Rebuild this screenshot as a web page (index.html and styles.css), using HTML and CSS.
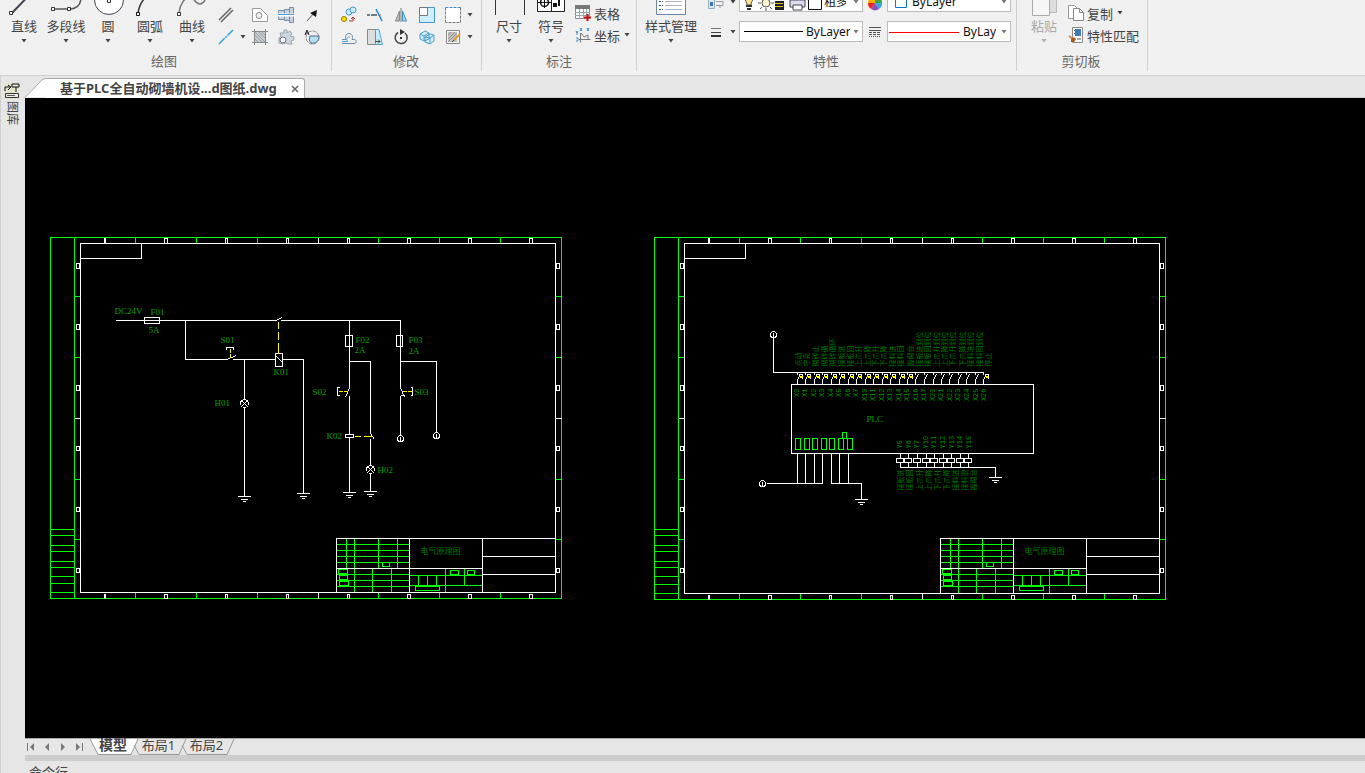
FILE: index.html
```
<!DOCTYPE html>
<html lang="zh-CN">
<head>
    <meta charset="utf-8">
    <meta name="viewport" content="width=device-width, initial-scale=1.0">
    <title>基于PLC全自动砌墙机设计图纸.dwg</title>
    <link rel="stylesheet" href="styles.css">
</head>
<body>
    <svg class="sprite" aria-hidden="true">
        <symbol id="caret" viewBox="0 0 6 4"><path d="M.500 0h5L3 3.500z" fill="currentColor"/></symbol>
    </svg>

    <div class="ribbon">
        <section class="panel panel-draw">
            <div class="tools">
                <button class="big-btn">
                    <svg class="big-icon" viewBox="0 0 32 32"><path d="M4 29 30 2" stroke="#445" stroke-width="2"/><path d="M1.500 27.500h3v3h-3z" fill="#fff" stroke="#333"/></svg>
                    <span>直线</span>
                    <svg class="caret"><use href="#caret"/></svg>
                </button>
                <button class="big-btn">
                    <svg class="big-icon" viewBox="0 0 32 32"><path d="M3 25h16c8 0 12-4 12-12" fill="none" stroke="#555" stroke-width="1.500"/><path d="M1.500 23.500h3v3h-3zM17.500 23.500h3v3h-3z" fill="#fff" stroke="#333"/></svg>
                    <span>多段线</span>
                    <svg class="caret"><use href="#caret"/></svg>
                </button>
                <button class="big-btn">
                    <svg class="big-icon" viewBox="0 0 32 32"><circle cx="17" cy="16" r="14.500" fill="#fff" stroke="#445"/><path d="M15.500 15.500h3v3h-3z" fill="#fff" stroke="#333"/></svg>
                    <span>圆</span>
                    <svg class="caret"><use href="#caret"/></svg>
                </button>
                <button class="big-btn">
                    <svg class="big-icon" viewBox="0 0 32 32"><path d="M4 29C5 22 8 16 14 11" fill="none" stroke="#333" stroke-width="1.500"/><path d="M2.500 28.500h3v3h-3z" fill="#fff" stroke="#111"/></svg>
                    <span>圆弧</span>
                    <svg class="caret"><use href="#caret"/></svg>
                </button>
                <button class="big-btn">
                    <svg class="big-icon" viewBox="0 0 32 32"><path d="M3 29C4 20 9 13 14 13c4 0 5 7 10 7 3 0 4-2 5-4" fill="none" stroke="#777" stroke-width="1.500"/><path d="M1.500 28.500h3v3h-3z" fill="#fff" stroke="#333"/></svg>
                    <span>曲线</span>
                    <svg class="caret"><use href="#caret"/></svg>
                </button>
                <div class="icon-grid grid-draw">
                    <button class="icon-btn" aria-label="多线"><svg class="icon" viewBox="0 0 16 16"><path d="M1 13 13 1M3 15 15 3" stroke="#666" stroke-width="1.500"/></svg></button>
                    <button class="icon-btn" aria-label="面域"><svg class="icon" viewBox="0 0 16 16"><path d="M.500 1.500h8l7 7v6H.500z" fill="#fff" stroke="#999"/><circle cx="7" cy="8.500" r="3" fill="#eee" stroke="#888"/></svg></button>
                    <button class="icon-btn" aria-label="轴"><svg class="icon" viewBox="0 0 16 16"><path d="M.500 3.500h6v9h-6zM6.500 2.500h5v11h-5zM11.500.500h4v15h-4z" fill="#c5d3e0" stroke="#7a8ea3"/><path d="M0 8h16" stroke="#fff" stroke-width="3"/><path d="M0 7.500h16" stroke="#4a9be0"/></svg></button>
                    <button class="icon-btn" aria-label="引线"><svg class="icon" viewBox="0 0 16 16"><path d="m3 14 7-8" stroke="#555"/><path d="m13 3-1 7-6-4z" fill="#111"/></svg></button>
                    <button class="icon-btn" aria-label="构造线"><svg class="icon" viewBox="0 0 16 16"><path d="M1 15 15 1" stroke="#29a3e3" stroke-width="1.500" stroke-dasharray="8 1 2 1"/></svg><svg class="caret"><use href="#caret"/></svg></button>
                    <button class="icon-btn" aria-label="图案填充"><svg class="icon" viewBox="0 0 16 16"><path d="M2.500 2.500h11v11h-11z" fill="#c4cacd"/><path d="m3 10 3 3M3 6l7 7M3 3l10 10M7 3l6 6M10 3l3 3" stroke="#9ba3a7"/><path d="M0 2.500h16M0 13.500h16M2.500 0v16M13.500 0v16" stroke="#888"/></svg></button>
                    <button class="icon-btn" aria-label="块"><svg class="icon" viewBox="0 0 16 16"><path d="M6 1h3v3l3-2 2 3-2 2 4 1v3l-3 1 1 3h-4l-2-1-3 1-4-1V9l2-2-1-3 4 0z" fill="#ccd6df" stroke="#9aa6b4"/><circle cx="5" cy="11" r="3" fill="#f4f4f4" stroke="#778"/></svg></button>
                    <button class="icon-btn" aria-label="文字环绕"><svg class="icon" viewBox="0 0 16 16"><circle cx="8.500" cy="8.500" r="6.500" fill="none" stroke="#888" stroke-dasharray="4 1"/><path d="M6 7h9c0 5-3 8-8 7-2-2-2-5-1-7z" fill="#b4e0f5" stroke="#568"/><path d="m1 6 2-5 2 5M2 4h2" fill="none" stroke="#222"/></svg></button>
                </div>
            </div>
            <h2 class="panel-title">绘图</h2>
        </section>

        <section class="panel panel-modify">
            <div class="tools">
                <div class="icon-grid grid-modify">
                    <span></span><span></span><span></span><span></span>
                    <button class="icon-btn" aria-label="阵列"><svg class="icon" viewBox="0 0 16 16"><path d="M1 14h5M9 14h6" stroke="#888" stroke-width="2"/></svg></button>
                    <button class="icon-btn" aria-label="复制对象"><svg class="icon" viewBox="0 0 16 16"><circle cx="3" cy="12" r="2.500" fill="#ffe600" stroke="#987a00"/><circle cx="8" cy="5" r="3" fill="#cdeafb" stroke="#469bd6"/><circle cx="12" cy="3" r="3" fill="#cdeafb" stroke="#469bd6"/><path d="M8 14h4v-3m-2 1 2-2 2 2" fill="none" stroke="#a33"/></svg></button>
                    <button class="icon-btn" aria-label="修剪"><svg class="icon" viewBox="0 0 16 16"><path d="M0 8h3m1 0h6" stroke="#456" stroke-width="1.500"/><path d="m9 2 6 12" stroke="#2389d7" stroke-width="1.500"/><path d="M11 8h4" stroke="#777" stroke-dasharray="1 1"/></svg></button>
                    <button class="icon-btn" aria-label="镜像"><svg class="icon" viewBox="0 0 16 16"><path d="M6.500 4v10h-4z" fill="#bbb" stroke="#888"/><path d="M9.500 4v10h4z" fill="#9fdcf9" stroke="#478fb8"/><path d="M8 1v14" stroke="#777"/></svg></button>
                    <button class="icon-btn" aria-label="缩放"><svg class="icon" viewBox="0 0 16 16"><path d="M.500.500h15v15H.500z" fill="#cdeefd" stroke="#4796c9"/><path d="M.500.500h8v8h-8z" fill="#fff" stroke="#777"/></svg></button>
                    <button class="icon-btn" aria-label="选择框"><svg class="icon" viewBox="0 0 16 16"><path d="M.500.500h15v15H.500z" fill="#fff"/><path d="M.500.500v15M.500.500h15" stroke="#3a90cf" stroke-dasharray="3 1"/><path d="M15.500.500v15H.500" fill="none" stroke="#777" stroke-dasharray="3 1"/></svg><svg class="caret"><use href="#caret"/></svg></button>
                    <button class="icon-btn" aria-label="偏移"><svg class="icon" viewBox="0 0 16 16"><path d="M1 14.500h12c3 0 3-4 0-4h-2c3-8-9-8-6 0H1" fill="none" stroke="#6d8da8"/><path d="M1 12.500h6c-3-2 0-6 2-4" fill="none" stroke="#4aa3dc"/></svg></button>
                    <button class="icon-btn" aria-label="拉伸"><svg class="icon" viewBox="0 0 16 16"><path d="M8 .500h4l3.500 15H8z" fill="#c9edfc" stroke="#5aa5d2"/><path d="M.500.500h8v15h-8z" fill="#ddd" stroke="#888"/><path d="M8 12.500h5m-2-2 2 2-2 2" fill="none" stroke="#444"/></svg></button>
                    <button class="icon-btn" aria-label="旋转"><svg class="icon" viewBox="0 0 16 16"><path d="M5 3.500a6 6 0 1 0 7 .500" fill="none" stroke="#444" stroke-width="1.500"/><path d="m7 0 5 3-5 3zM7 8h2v2H7z" fill="#333"/></svg></button>
                    <button class="icon-btn" aria-label="三维旋转"><svg class="icon" viewBox="0 0 16 16"><path d="m1 5 5-3 4 2v6l-5 2-4-2zM6 8l5-3 4 1v6l-4 3-5-2z" fill="#d3effc" stroke="#4b9dcc"/><path d="m1 5 4 2v5M5 7l5-3M6 8l5 1v6m0-6 4-3" fill="none" stroke="#4b9dcc"/></svg></button>
                    <button class="icon-btn" aria-label="编辑填充"><svg class="icon" viewBox="0 0 16 16"><path d="M1.500 1.500h13v13h-13z" fill="#f4f4f4" stroke="#888"/><path d="M3 3h9v10H3z" fill="#c0c0c0"/><path d="m3 6 3-3M3 10l7-7M3 13l9-9M7 13l5-5" stroke="#999"/><path d="m9 11 6-6" stroke="#e39a2a" stroke-width="2"/><path d="m7 13 2-2" stroke="#444"/></svg><svg class="caret"><use href="#caret"/></svg></button>
                </div>
            </div>
            <h2 class="panel-title">修改</h2>
        </section>

        <section class="panel panel-note">
            <div class="tools">
                <button class="big-btn">
                    <svg class="big-icon" viewBox="0 0 32 32"><path d="M2.500 0v31M31.500 0v31M2 10h29" fill="none" stroke="#333"/></svg>
                    <span>尺寸</span>
                    <svg class="caret"><use href="#caret"/></svg>
                </button>
                <button class="big-btn">
                    <svg class="big-icon" viewBox="0 0 32 32"><path d="M2.500 6.500h27v21h-27zM16.500 7v20" fill="#fff" stroke="#222"/><circle cx="9.500" cy="18.500" r="4" fill="none" stroke="#111" stroke-width="1.500"/><path d="M3 18.500h13M9.500 12v12" stroke="#111"/><path d="M24 15v7M19 20h2v2h-2z" stroke="#111" stroke-width="2"/></svg>
                    <span>符号</span>
                    <svg class="caret"><use href="#caret"/></svg>
                </button>
                <div class="text-col">
                    <button class="text-btn"><svg class="icon" viewBox="0 0 16 16"><path d="M.500.500h14v13H.500z" fill="#fff" stroke="#888"/><path d="M0 0h15v4H0z" fill="#777"/><path d="M0 7.500h15M0 10.500h15M4.500 4v10M8.500 4v10M11.500 4v10" stroke="#9aa"/><path d="M12.500 9v7M9 12.500h7" stroke="#c11" stroke-width="2"/></svg>表格</button>
                    <button class="text-btn"><svg class="icon" viewBox="0 0 16 16"><path d="M5.500 6v9.500M4 12.500h11.500M6 6l3 4 4-2 0 5" fill="none" stroke="#777"/><path d="m1 4 1 2 1-2M2 6v2M1 11h2v3H1M5 1l2 3m0-3L5 4M12 1l2 3m0-3-2 3" fill="none" stroke="#3a8fd0"/></svg>坐标<svg class="caret"><use href="#caret"/></svg></button>
                </div>
            </div>
            <h2 class="panel-title">标注</h2>
        </section>

        <section class="panel panel-props">
            <div class="tools">
                <button class="big-btn wide-btn">
                    <svg class="big-icon" viewBox="0 0 32 32"><path d="M1.500-4.500h29v35h-29z" fill="#fff" stroke="#6b86a4"/><path d="M4 17.500h4M4 21.500h4M4 25.500h4" stroke="#355577" stroke-dasharray="2 1"/><path d="M10 17.500h17M10 21.500h17M10 25.500h17" stroke="#a9b9c9"/><path d="M12 14h6l-1 2h-4z" fill="#d9b5a0"/></svg>
                    <span>样式管理</span>
                    <svg class="caret"><use href="#caret"/></svg>
                </button>
                <div class="prop-grid">
                    <button class="prop-btn" aria-label="图层"><svg class="icon" viewBox="0 0 16 16"><path d="M.500.500h6v14h-6z" fill="#dbe7f2" stroke="#9ab"/><path d="M2 8h3v4H2z" fill="#3a78b5"/><path d="M8 7.500h7v4H8M12 11v3" fill="none" stroke="#99a"/></svg><svg class="caret"><use href="#caret"/></svg></button>
                    <div class="combo combo-layer">
                        <select aria-label="当前图层"><option>粗多段线</option></select>
                        <svg viewBox="0 0 80 20"><path d="M13 4a4 4 0 0 0-8 2c0 3 2 4 2 7h4c0-3 2-4 2-7z" fill="#ffe48a" stroke="#555"/><path d="M6 14h6M7 17h4" stroke="#333" stroke-width="2"/><circle cx="26" cy="11" r="4" fill="#fff3cf" stroke="#555"/><path d="M26 3v3M26 16v3M18 11h3M31 11h3M20 5l2 2M32 5l-2 2M20 17l2-2M32 17l-2-2" stroke="#555"/><path d="M35 9h9v9h-9z" fill="#222"/><path d="M35 11.500h8M35 14.500h8" stroke="#d8c800"/><path d="M52 3h11v4H52zM50 8h15v7H50z" fill="#dde" stroke="#445"/><path d="M53 13h9v5h-9z" fill="#fff" stroke="#445"/><path d="M68.500 3.500h13v14h-13z" fill="#fff" stroke="#111"/></svg>
                        <svg class="caret"><use href="#caret"/></svg>
                    </div>
                    <button class="mini-btn" aria-label="颜色"><svg class="icon" viewBox="0 0 16 16"><path d="M8 9V2a7 7 0 0 1 7 7z" fill="#3aa53a"/><path d="M8 9h7a7 7 0 0 1-3 6z" fill="#31a8e0"/><path d="m8 9 4 6a7 7 0 0 1-8 0z" fill="#8c4fc0"/><path d="m8 9-4 6a7 7 0 0 1-3-6z" fill="#e22"/><path d="M8 9H1a7 7 0 0 1 7-7z" fill="#fa0"/></svg></button>
                    <div class="combo combo-color">
                        <select aria-label="对象颜色"><option>ByLayer</option></select>
                        <svg viewBox="0 0 80 20"><path d="M7.500 4.500h11v11h-11z" fill="#fff" stroke="#0a78d0"/></svg>
                        <svg class="caret"><use href="#caret"/></svg>
                    </div>
                    <button class="prop-btn" aria-label="线宽"><svg class="icon" viewBox="0 0 16 16"><path d="M3 4.500h10" stroke="#777"/><path d="M3 8.500h10" stroke="#444"/><path d="M3 12h10" stroke="#333" stroke-width="2"/></svg><svg class="caret"><use href="#caret"/></svg></button>
                    <div class="combo combo-weight">
                        <select aria-label="对象线宽"><option>ByLayer</option></select>
                        <svg viewBox="0 0 80 20"><path d="M4 9.500h59" stroke="#000"/></svg>
                        <svg class="caret"><use href="#caret"/></svg>
                    </div>
                    <button class="mini-btn" aria-label="线型"><svg class="icon" viewBox="0 0 16 16"><path d="M2 3.500h12M2 6.500h12" stroke="#555"/><path d="M2 8.500h12M2 10.500h12" stroke="#555" stroke-dasharray="3 1"/><path d="M2 12.500h12" stroke="#555" stroke-dasharray="1 1"/></svg></button>
                    <div class="combo combo-type">
                        <select aria-label="对象线型"><option>ByLayer</option></select>
                        <svg viewBox="0 0 80 20"><path d="M1 10.500h70" stroke="#ff0000"/></svg>
                        <svg class="caret"><use href="#caret"/></svg>
                    </div>
                </div>
            </div>
            <h2 class="panel-title">特性</h2>
        </section>

        <section class="panel panel-clip">
            <div class="tools">
                <button class="big-btn" disabled>
                    <svg class="big-icon" viewBox="0 0 32 32"><path d="M20.500 6.500h8v22h-8z" fill="#ddd" stroke="#bbb"/><path d="M4.500 15.500h17v16h-17z" fill="#f6f6f6" stroke="#aaa"/></svg>
                    <span>粘贴</span>
                    <svg class="caret"><use href="#caret"/></svg>
                </button>
                <div class="text-col">
                    <button class="text-btn" aria-label="剪切"><svg class="icon" viewBox="0 0 16 16"><path d="M4 13h2M10 13h3" stroke="#999" stroke-width="2"/></svg></button>
                    <button class="text-btn"><svg class="icon" viewBox="0 0 16 16"><path d="M.500.500h6l3 3v10h-9z" fill="#fff" stroke="#999"/><path d="M5.500 3.500h6l4 4v8h-10z" fill="#fff" stroke="#888"/><path d="M11.500 3.500v4h4" fill="none" stroke="#888"/></svg>复制<svg class="caret"><use href="#caret"/></svg></button>
                    <button class="text-btn"><svg class="icon" viewBox="0 0 16 16"><path d="M4.500.500h10v15h-10z" fill="#fff" stroke="#888"/><path d="M7 2h6v7H7z" fill="#3f7bb4"/><path d="M6 3.500h1M6 6.500h1M9 12h4" stroke="#555"/><path d="m1 9 4 3" stroke="#c98b55" stroke-width="2"/><path d="M3 12c2-2 4-2 5 0l-2 3H3z" fill="#a85a14"/></svg>特性匹配</button>
                </div>
            </div>
            <h2 class="panel-title">剪切板</h2>
        </section>
    </div>

    <div class="workspace">
        <aside class="side-dock">
            <button class="dock-btn">
                <svg viewBox="0 0 16 16"><path d="M0 0h16v16H0z" fill="#e6e6cf"/><path d="M1 8V4h5M4 2l3 2-3 3M8 1h7v3H8zM12 4v5" fill="none" stroke="#111"/><path d="M1.500 10.500h13v4h-13z" fill="#eee" stroke="#333"/><path d="M3 12.500h8" stroke="#555"/></svg>
                <span>图库</span>
            </button>
        </aside>

        <main class="document">
            <div class="file-tabs">
                <div class="file-tab">
                    <svg class="tab-edge" viewBox="0 0 20 19"><path d="M0 19 18 .500H20V19z" fill="#fff"/><path d="M0 19 18 .500H20" fill="none" stroke="#aaa"/></svg>
                    <div class="tab-body">
                        <span>基于PLC全自动砌墙机设...d图纸.dwg</span>
                        <button class="close-btn" aria-label="关闭"><svg viewBox="0 0 8 8"><path d="m1 1 6 6M7 1 1 7" stroke="#666" stroke-width="1.500"/></svg></button>
                    </div>
                </div>
            </div>

            <!-- model space, one unit per pixel -->
            <svg class="model" viewBox="24.5 97.5 1340 640" preserveAspectRatio="xMinYMin meet">
                <defs>
                    <g id="ground"><path d="M-7 0H6M-4 3H3M-2 5H1"/></g>
                    <g id="lamp"><circle r="4"/><path d="m-3-3 6 6M3-3l-6 6"/></g>
                    <g id="node"><circle r="3"/><path d="M0-2v4"/></g>
                    <path id="contact" d="M0 372v2M3 374l-3 5v5"/>
                    <g id="button-tag"><use href="#contact"/><path d="M1 374h4v4"/><path class="y" d="M1 376h4M2 377h3"/></g>
                    <path id="load" d="M0 453v5M-4 458h7v4h-7zM0 462v5"/>

                    <g id="sheet">
                        <path class="g" d="M50 580V237H561V580M74 237V580M50 529H74M50 535H74M50 545H74M50 551H74M50 561H74M50 567H74M50 576H74"/>
                        <path class="g" d="M135 237v6M196 237v6M257 237v6M378 237v6M439 237v6M500 237v6"/>
                        <path class="g" d="M74 296h6M74 357h6M74 479h6M74 539h6M555 296h6M555 357h6M555 479h6M555 539h6"/>
                        <path class="w" d="M80 580V243H555V580M80 258H141V243M318 237v6M74 418h6M555 418h6"/>
                        <path class="w" d="M104 238h1v5h-1zM164 238h3v5h-3zM225 238h2v5h-2zM286 238h2v5h-2zM347 238h2v5h-2zM407 238h3v5h-3zM468 238h3v5h-3zM529 238h3v5h-3z"/>
                        <path class="w" d="M76 263h3v5h-3zM76 324h3v5h-3zM76 385h3v5h-3zM76 446h3v4h-3zM76 507h3v4h-3zM76 568h3v4h-3z"/>
                        <path class="w" d="M556 263h3v5h-3zM556 324h3v5h-3zM556 385h3v5h-3zM556 446h3v4h-3zM556 507h3v4h-3zM556 568h3v4h-3z"/>
                        <!-- title block -->
                        <path class="g" d="M336 544H409M336 550H409M336 556H409M336 562H409M336 574H409M336 580H409M336 586H409"/>
                        <path class="g" d="M346 538V568M354 538V592M378 538V568M397 538V568M372 568V592M391 568V592M382 562h7v4h-7z"/>
                        <path class="g" d="M338 569h9v4h-9zM339 575h8v4h-8zM339 581h9v4h-9z"/>
                        <path class="g" d="M409 575H482M409 585H482M418 575V585M427 575V585M436 575V585M445 568V592M464 568V585M450 570h8v4h-8zM467 570h7v4h-7zM415 586h24v4h-24z"/>
                        <path class="w" d="M336 592V538H555M409 538V592M482 538V592M336 568H482M482 556H555M482 574H555"/>
                        <text class="small block-name" x="420" y="553">电气原理图</text>
                    </g>
                    <g id="sheet-foot">
                        <path class="g" d="M50 578V598H561V578M74 578V598M50 583H74M50 592H74M135 592v6M196 592v6M257 592v6M378 592v6M439 592v6M500 592v6"/>
                        <path class="w" d="M80 578V592H555V578M318 592v6"/>
                        <path class="w" d="M104 594h1v4h-1zM164 594h3v4h-3zM225 594h2v4h-2zM286 594h2v4h-2zM347 594h2v4h-2zM407 594h3v4h-3zM468 594h3v4h-3zM529 594h3v4h-3z"/>
                    </g>
                </defs>

                <use href="#sheet"/>
                <use href="#sheet-foot"/>
                <use href="#sheet" x="604"/>
                <use href="#sheet-foot" x="604" y="1"/>

                <!-- power circuit -->
                <g class="w">
                    <path d="M115 320H275L282 317M280 320H400M144 317h15v6h-15z"/>
                    <path d="M185 320V359H226L236 355M232 359H303V493M244 359V399M244 407V496"/>
                    <path d="M226 349v-2h7v2"/>
                    <path class="solid" d="M275 353h7v13h-7z"/>
                    <path d="m275 355 7 7"/>
                    <path d="M349 320V387M349 395V492M349 387 345 397M345 335h7v11h-7zM349 361H370V433M370 438V465M370 473V491M370 433 374 439"/>
                    <path d="M400 320V387L404 397M400 395h4M400 395V435M396 335h6v11h-6zM400 361H436V432"/>
                    <path d="M339 387h-2v8h2M410 387h2v8h-2"/>
                    <path class="solid" d="M345 434h8v3h-8z"/>
                    <use href="#lamp" x="244" y="403"/>
                    <use href="#lamp" x="370" y="469"/>
                    <use href="#node" x="400" y="438"/>
                    <use href="#node" x="436" y="435"/>
                    <use href="#ground" x="244" y="496"/>
                    <use href="#ground" x="303" y="493"/>
                    <use href="#ground" x="349" y="492"/>
                    <use href="#ground" x="370" y="491"/>
                </g>
                <path class="y" d="M278 321v7M278 331v8M278 342v11M230 348v4M230 353v4M338 391h4M343 391h4M402 391h4M407 391h4M354 436h6M363 436h8"/>
                <g class="label">
                    <text class="supply" x="114" y="313">DC24V</text>
                    <text x="150" y="314">F01</text>
                    <text x="148" y="332">5A</text>
                    <text x="220" y="342">S01</text>
                    <text x="273" y="374">K01</text>
                    <text x="214" y="405">H01</text>
                    <text x="355" y="342">F02</text>
                    <text x="354" y="352">2A</text>
                    <text x="408" y="342">F03</text>
                    <text x="408" y="353">2A</text>
                    <text x="312" y="394">S02</text>
                    <text x="414" y="394">S03</text>
                    <text x="326" y="438">K02</text>
                    <text x="377" y="472">H02</text>
                </g>

                <!-- PLC wiring -->
                <g class="w">
                    <path d="M791 384H1033V453H791zM773 337V372H983"/>
                    <path d="M766 483H822V453M797 453V483M805 453V483M814 453V483M831 453V483H861V499M839 453V483M848 453V483"/>
                    <path d="M900 467H995V477"/>
                    <use href="#node" x="773" y="334"/>
                    <use href="#node" x="762" y="483"/>
                    <use href="#ground" x="861" y="499"/>
                    <use href="#ground" x="995" y="477"/>
                    <use href="#button-tag" x="797"/>
                    <use href="#button-tag" x="805"/>
                    <use href="#button-tag" x="814"/>
                    <use href="#button-tag" x="822"/>
                    <use href="#button-tag" x="831"/>
                    <use href="#button-tag" x="839"/>
                    <use href="#button-tag" x="848"/>
                    <use href="#button-tag" x="856"/>
                    <use href="#button-tag" x="865"/>
                    <use href="#button-tag" x="873"/>
                    <use href="#button-tag" x="882"/>
                    <use href="#button-tag" x="890"/>
                    <use href="#button-tag" x="899"/>
                    <use href="#button-tag" x="907"/>
                    <use href="#contact" x="915"/>
                    <use href="#contact" x="924"/>
                    <use href="#contact" x="933"/>
                    <use href="#contact" x="941"/>
                    <use href="#contact" x="949"/>
                    <use href="#contact" x="958"/>
                    <use href="#contact" x="966"/>
                    <use href="#contact" x="975"/>
                    <use href="#button-tag" x="983"/>
                    <use href="#load" x="900"/>
                    <use href="#load" x="908"/>
                    <use href="#load" x="917"/>
                    <use href="#load" x="926"/>
                    <use href="#load" x="934"/>
                    <use href="#load" x="943"/>
                    <use href="#load" x="951"/>
                    <use href="#load" x="960"/>
                    <use href="#load" x="968"/>
                </g>
                <path class="g" d="M795 438h5v11h-5zM804 438h5v11h-5zM812 438h5v11h-5zM821 438h5v11h-5zM829 438h5v11h-5zM838 438h5v11h-5zM847 438h5v11h-5zM842 432h4v6h-4z"/>
                <text class="label" x="866" y="421">PLC</text>
                <!-- vertical texts: x is minus the sheet y, y is the sheet x -->
                <g class="small" transform="rotate(-90)">
                    <text x="-366" y="800">点动</text>
                    <text x="-366" y="808">守克</text>
                    <text x="-366" y="817">砌砖止</text>
                    <text x="-366" y="826">砌砖循</text>
                    <text x="-366" y="834">砌砖循环</text>
                    <text x="-366" y="843">接板进</text>
                    <text x="-366" y="852">接板回</text>
                    <text x="-366" y="860">上爪升</text>
                    <text x="-366" y="869">上爪降</text>
                    <text x="-366" y="877">下爪升</text>
                    <text x="-366" y="885">下爪降</text>
                    <text x="-366" y="894">接料进</text>
                    <text x="-366" y="902">接料回</text>
                    <text x="-366" y="912">搬砌台</text>
                    <text x="-366" y="921">接板进到位</text>
                    <text x="-366" y="929">接板回到位</text>
                    <text x="-366" y="938">上爪升到位</text>
                    <text x="-366" y="946">上爪降到位</text>
                    <text x="-366" y="954">下爪升到位</text>
                    <text x="-366" y="964">下爪降到位</text>
                    <text x="-366" y="972">接料进到位</text>
                    <text x="-366" y="981">接料回到位</text>
                    <text x="-366" y="990">停止</text>
                    <text x="-490" y="902">接板进</text>
                    <text x="-490" y="911">接板回</text>
                    <text x="-490" y="921">上爪升</text>
                    <text x="-490" y="930">上爪降</text>
                    <text x="-490" y="939">下爪升</text>
                    <text x="-490" y="948">下爪降</text>
                    <text x="-490" y="957">接料进</text>
                    <text x="-490" y="966">接料退</text>
                    <text x="-490" y="975">搬砌台</text>
                </g>
                <g class="pin pin-in" transform="rotate(-90)">
                    <text x="-388" y="798">X0</text>
                    <text x="-388" y="806">X1</text>
                    <text x="-388" y="815">X2</text>
                    <text x="-388" y="823">X3</text>
                    <text x="-388" y="832">X4</text>
                    <text x="-388" y="840">X5</text>
                    <text x="-388" y="849">X6</text>
                    <text x="-388" y="857">X7</text>
                    <text x="-388" y="866">X10</text>
                    <text x="-388" y="874">X11</text>
                    <text x="-388" y="883">X12</text>
                    <text x="-388" y="891">X13</text>
                    <text x="-388" y="900">X14</text>
                    <text x="-388" y="908">X15</text>
                    <text x="-388" y="917">X16</text>
                    <text x="-388" y="925">X17</text>
                    <text x="-388" y="934">X20</text>
                    <text x="-388" y="942">X21</text>
                    <text x="-388" y="951">X22</text>
                    <text x="-388" y="959">X23</text>
                    <text x="-388" y="968">X24</text>
                    <text x="-388" y="977">X25</text>
                    <text x="-388" y="985">X26</text>
                </g>
                <g class="pin" transform="rotate(-90)">
                    <text x="-448" y="901">Y5</text>
                    <text x="-448" y="910">Y6</text>
                    <text x="-448" y="918">Y7</text>
                    <text x="-448" y="927">Y10</text>
                    <text x="-448" y="935">Y11</text>
                    <text x="-448" y="944">Y12</text>
                    <text x="-448" y="953">Y13</text>
                    <text x="-448" y="961">Y14</text>
                    <text x="-448" y="970">Y15</text>
                </g>
            </svg>

            <nav class="layout-bar">
                <div class="layout-nav">
                    <button aria-label="第一个"><svg viewBox="0 0 8 8"><path d="M7 0v8L3 4zM0 0h1v8H0z"/></svg></button>
                    <button aria-label="上一个"><svg viewBox="0 0 8 8"><path d="M6 0v8L2 4z"/></svg></button>
                    <button aria-label="下一个"><svg viewBox="0 0 8 8"><path d="M2 0v8l4-4z"/></svg></button>
                    <button aria-label="最后一个"><svg viewBox="0 0 8 8"><path d="M1 0v8l4-4zM7 0h1v8H7z"/></svg></button>
                </div>
                <button class="layout-tab active"><svg viewBox="0 0 48 16"><path d="M0 0 8 15.500H41L48 0"/></svg><span>模型</span></button>
                <button class="layout-tab"><svg viewBox="0 0 48 16"><path d="M-4 6 1 15.500H41L48 0"/></svg><span>布局1</span></button>
                <button class="layout-tab"><svg viewBox="0 0 48 16"><path d="M-4 6 1 15.500H41L48 0"/></svg><span>布局2</span></button>
            </nav>
            <div class="splitter"></div>
            <div class="command-line">命令行</div>
        </main>
    </div>
</body>
</html>
```
FILE: styles.css
```
* {
    box-sizing: border-box;
}
body {
    margin: 0;
    height: 100vh;
    display: flex;
    flex-direction: column;
    overflow: hidden;
    background: #e6e6e6;
    color: #444;
    font-family: "Noto Sans", "Noto Sans CJK SC", sans-serif;
    font-size: 13px;
}
button {
    border: 0;
    padding: 0;
    background: none;
    color: inherit;
    font: inherit;
}
svg {
    display: block;
    flex-shrink: 0;
    overflow: visible;
}
.sprite {
    display: none;
}
.caret {
    width: 6px;
    height: 4px;
    color: #444;
}

/* ribbon */
.ribbon {
    display: flex;
    flex-shrink: 0;
    height: 76px;
    padding-bottom: 4px;
    background: #f0f0f0;
    border-bottom: 1px solid #d0d0d0;
    overflow: hidden;
}
.panel {
    display: flex;
    flex-direction: column;
    justify-content: flex-end;
    flex-shrink: 0;
    border-right: 1px solid #d0d0d0;
}
.panel-draw {
    padding: 0 6px 0 3px;
}
.panel-modify {
    padding: 0 5px 0 4px;
}
.panel-note {
    padding: 0 6px 0 6px;
}
.panel-props {
    padding: 0 5px 0 4px;
}
.panel-clip {
    padding: 0 8px 0 6px;
}
.tools {
    display: flex;
    align-items: flex-end;
}
.panel-title {
    margin: 0;
    font-size: 13px;
    font-weight: normal;
    line-height: 20px;
    text-align: center;
    color: #666;
}
.big-btn {
    display: flex;
    flex-direction: column;
    align-items: center;
    width: 42px;
    padding-bottom: 8px;
    line-height: 18px;
    white-space: nowrap;
}
.big-btn .caret {
    margin-top: 4px;
}
.big-btn:disabled,
.big-btn:disabled .caret {
    color: #aaa;
}
.wide-btn {
    width: 60px;
}
.big-icon {
    width: 32px;
    height: 32px;
    margin-bottom: 1px;
}
.icon {
    width: 16px;
    height: 16px;
}
.icon-grid {
    display: grid;
    grid-auto-rows: 22px;
    padding-bottom: 3px;
}
.grid-draw {
    grid-template-columns: 34px 26px 26px 26px;
}
.grid-modify {
    grid-template-columns: 26px 26px 26px 26px 36px;
}
.icon-btn {
    display: flex;
    align-items: center;
    gap: 6px;
    padding-left: 5px;
}
.text-col {
    display: flex;
    flex-direction: column;
    padding: 0 0 5px 3px;
}
.text-btn {
    display: flex;
    align-items: center;
    gap: 3px;
    height: 22px;
}
.text-btn .caret {
    margin-left: 1px;
}

/* property drop-downs */
.prop-grid {
    display: grid;
    grid-template-columns: 38px 124px 24px 124px;
    grid-auto-rows: 21px;
    row-gap: 9px;
    padding-bottom: 9px;
}
.prop-btn {
    display: flex;
    align-items: center;
    gap: 6px;
    padding-left: 7px;
}
.mini-btn {
    display: flex;
    align-items: center;
    justify-content: center;
}
.combo {
    display: grid;
    align-items: center;
}
.combo > * {
    grid-area: 1 / 1;
    pointer-events: none;
}
.combo > svg {
    width: 80px;
    height: 20px;
    margin-left: 1px;
}
.combo > .caret {
    justify-self: end;
    width: 6px;
    height: 4px;
    margin-right: 4px;
    color: #777;
}
.combo select {
    appearance: none;
    pointer-events: auto;
    width: 100%;
    height: 21px;
    margin: 0;
    border: 1px solid #bbb;
    border-radius: 0;
    background: #fff;
    color: #111;
    font-family: "Noto Sans", "Noto Sans CJK SC", sans-serif;
    font-size: 12px;
}
.combo-layer select {
    padding: 0 16px 0 84px;
}
.combo-color select {
    padding: 0 14px 0 24px;
}
.combo-weight select {
    padding: 0 12px 0 66px;
}
.combo-type select {
    padding: 0 14px 0 75px;
}

/* workspace */
.workspace {
    display: flex;
    flex: 1;
    min-height: 0;
}
.side-dock {
    width: 25px;
    flex-shrink: 0;
    border-left: 1px solid #d0d0d0;
}
.dock-btn {
    display: flex;
    flex-direction: column;
    align-items: center;
    gap: 2px;
    padding: 7px 3px;
}
.dock-btn svg {
    width: 16px;
    height: 16px;
}
.dock-btn span {
    writing-mode: vertical-rl;
    text-orientation: sideways;
    font-size: 12px;
    line-height: 16px;
}
.document {
    display: flex;
    flex-direction: column;
    flex: 1;
    min-width: 0;
}
.file-tabs {
    height: 22px;
    flex-shrink: 0;
    padding-top: 2px;
    border-bottom: 1px solid #ccc;
}
.file-tab {
    display: flex;
    width: max-content;
}
.tab-edge {
    width: 20px;
    height: 20px;
}
.tab-body {
    display: flex;
    align-items: center;
    gap: 14px;
    height: 20px;
    padding: 0 5px 0 15px;
    background: #fff;
    border: 1px solid #aaa;
    border-width: 1px 1px 0 0;
    border-radius: 0 3px 0 0;
    font-weight: bold;
}
.tab-body span {
    padding-bottom: 3px;
}
.close-btn svg {
    width: 8px;
    height: 8px;
}

/* drawing */
.model {
    flex: 1;
    min-height: 0;
    width: 100%;
    background: #000;
    overflow: hidden;
    shape-rendering: crispEdges;
}
.g,
.w,
.y {
    fill: none;
    stroke-width: 1px;
}
.g {
    stroke: #00ff00;
}
.w {
    stroke: #fff;
}
.y {
    stroke: #ffff00;
}
.solid {
    fill: #000;
}
.label {
    fill: #00a000;
    font: 9px "Liberation Serif", serif;
}
.small {
    fill: #007800;
    font: 7px "Noto Sans CJK SC", sans-serif;
}
.block-name {
    font-size: 8px;
}
.pin {
    fill: #009000;
    font: 7px "Liberation Mono", monospace;
}
.pin-in {
    text-anchor: end;
}

/* layout tabs and command line */
.layout-bar {
    display: flex;
    height: 17px;
    flex-shrink: 0;
    border-top: 1px solid #aaa;
}
.layout-nav {
    display: flex;
    align-items: center;
    gap: 8px;
    padding: 0 7px 0 2px;
}
.layout-nav svg {
    width: 8px;
    height: 8px;
    fill: #777;
}
.layout-tab {
    display: grid;
    width: 48px;
    height: 16px;
    line-height: 12px;
}
.layout-tab > * {
    grid-area: 1 / 1;
}
.layout-tab svg {
    width: 48px;
    height: 16px;
    fill: none;
    stroke: #999;
}
.layout-tab span {
    padding-right: 7px;
    white-space: nowrap;
    z-index: 1;
}
.layout-tab.active {
    font-size: 14px;
    font-weight: bold;
}
.layout-tab.active svg {
    fill: #fff;
}
.layout-tab.active span {
    padding-right: 2px;
}
.splitter {
    height: 6px;
    flex-shrink: 0;
    background: #ccc;
}
.command-line {
    height: 12px;
    flex-shrink: 0;
    padding: 2px 0 0 4px;
    line-height: 18px;
    overflow: hidden;
}
```
